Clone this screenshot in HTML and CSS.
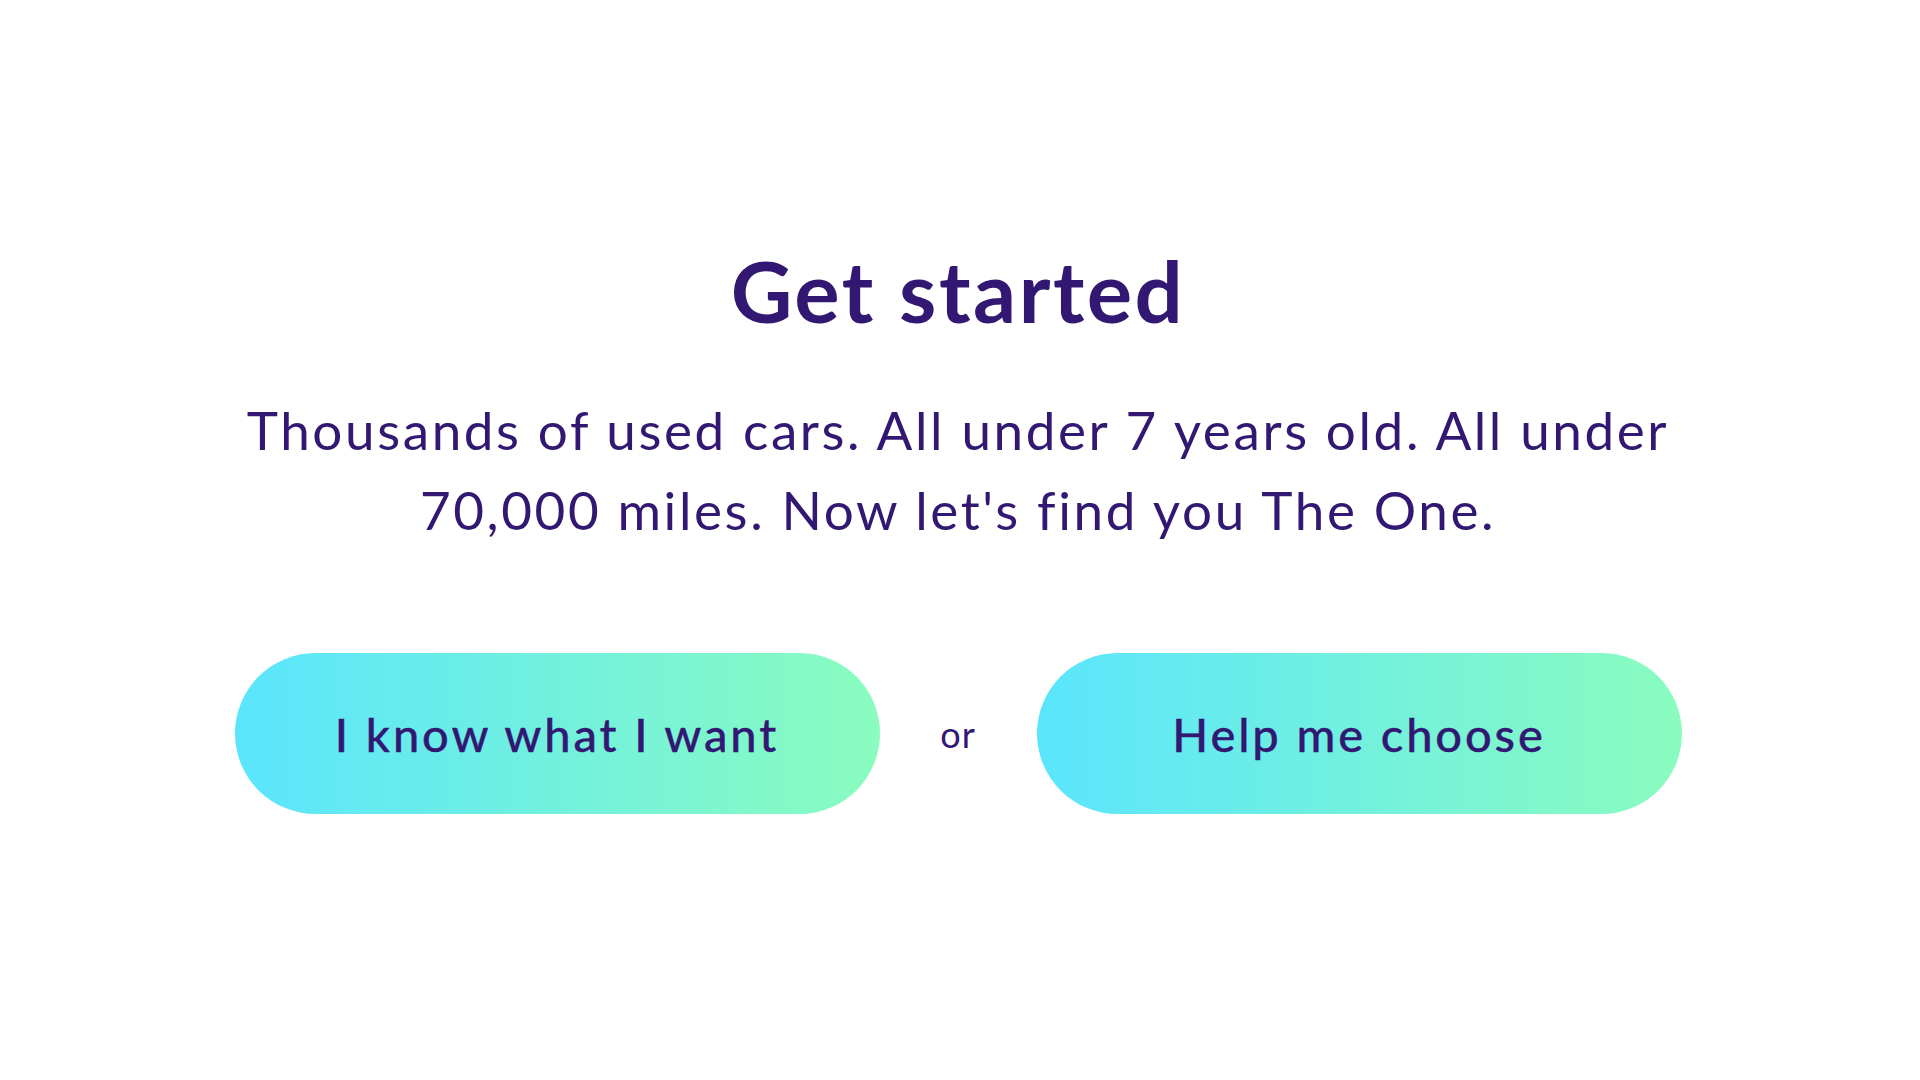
FILE: index.html
```html
<!DOCTYPE html>
<html lang="en">
<head>
  <meta charset="UTF-8">
  <meta name="viewport" content="width=device-width, initial-scale=1.0">
  <title>Get started</title>
  <link rel="stylesheet" href="styles.css">
</head>
<body>
  <main class="start">
    <h1 class="start-title">Get started</h1>
    <p class="start-text">Thousands of used cars. All under 7 years old. All under 70,000 miles. Now let's find you The One.</p>
    <div class="start-actions">
      <a class="pill" href="#">I know what I want</a>
      <span class="or">or</span>
      <a class="pill" href="#">Help me choose</a>
    </div>
  </main>
</body>
</html>
```

FILE: styles.css
```css
:root {
  --ink: #321873;
  --cyan: #5ae5fd;
  --mint: #8afcbe;
}
body {
  margin: 0;
  background: #fff;
  color: var(--ink);
  font-family: Lato, "Noto Sans", sans-serif;
}
.start {
  display: flex;
  flex-direction: column;
  align-items: center;
  padding: 240px 4px 0 0;
}
.start-title {
  margin: 0;
  font-size: 85px;
  font-weight: 700;
  line-height: 100px;
  letter-spacing: 2.5px;
}
.start-text {
  margin: 50px 0 0;
  width: 1500px;
  text-align: center;
  font-size: 53px;
  line-height: 80px;
  letter-spacing: 2.6px;
}
.start-actions {
  display: flex;
  align-items: center;
  margin-top: 103px;
}
.pill {
  display: flex;
  align-items: center;
  justify-content: center;
  width: 645px;
  height: 161px;
  border-radius: 81px;
  background: linear-gradient(90deg, var(--cyan), var(--mint));
  color: var(--ink);
  font-size: 47px;
  font-weight: 500;
  letter-spacing: 2.9px;
  -webkit-text-stroke: 0.35px var(--ink);
  text-decoration: none;
}
.or {
  width: 157px;
  text-align: center;
  font-size: 36px;
  letter-spacing: 1px;
}
```
